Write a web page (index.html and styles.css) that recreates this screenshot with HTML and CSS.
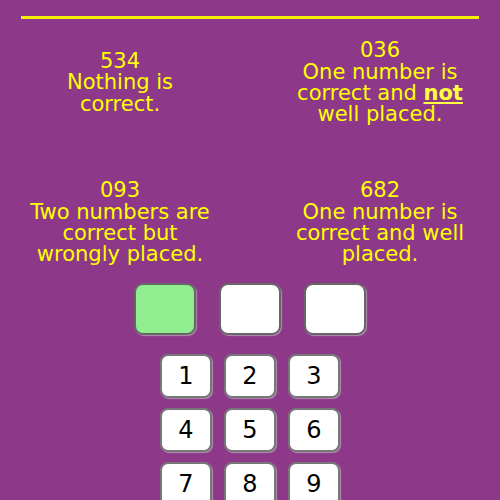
FILE: index.html
```html
<!DOCTYPE html>
<html>
<head>
<meta charset="utf-8">
<link rel="stylesheet" href="styles.css">
</head>
<body>
<div class="rule"></div>
<div class="clues">
  <div class="clue"><p class="txt">534<br>Nothing is<br>correct.</p></div>
  <div class="clue"><p class="txt">036<br>One number is<br>correct and <b class="em">not</b><br>well placed.</p></div>
  <div class="clue"><p class="txt">093<br>Two numbers are<br>correct but<br>wrongly placed.</p></div>
  <div class="clue"><p class="txt">682<br>One number is<br>correct and well<br>placed.</p></div>
</div>
<div class="slots">
  <div class="slot active"></div>
  <div class="slot"></div>
  <div class="slot"></div>
</div>
<div class="keypad">
  <div class="key">1</div><div class="key">2</div><div class="key">3</div>
  <div class="key">4</div><div class="key">5</div><div class="key">6</div>
  <div class="key">7</div><div class="key">8</div><div class="key">9</div>
</div>
</body>
</html>
```
FILE: styles.css
```css
html, body {
  margin: 0;
  padding: 0;
  background: #8e388a;
  height: 100%;
  overflow: hidden;
}
body {
  font-family: "DejaVu Sans", Verdana, sans-serif;
  color: #ffff00;
}
.rule {
  margin: 16px 21px 0 21px;
  height: 0;
  border-top: 3px solid #f4ee00;
}
.clues {
  display: grid;
  grid-template-columns: 240px 240px;
  column-gap: 20px;
  grid-auto-rows: 100px;
  row-gap: 40px;
  margin-top: 14px;
}
.clue {
  display: flex;
  align-items: center;
  justify-content: center;
  text-align: center;
}
.txt {
  margin: 0;
  font-size: 21px;
  line-height: 21.33px;
}
.em {
  text-decoration: underline;
  color: #ffff40;
}
.slots {
  display: flex;
  justify-content: center;
  gap: 23px;
  margin-top: 10px;
}
.slot {
  box-sizing: border-box;
  width: 62px;
  height: 52px;
  background: #fff;
  border: 2px solid #666;
  border-radius: 9px;
  box-shadow: 1px 1px 1px rgba(200,200,200,0.6);
}
.slot.active {
  background: #90ee90;
}
.keypad {
  display: grid;
  grid-template-columns: repeat(3, 52px);
  grid-auto-rows: 44px;
  column-gap: 12px;
  row-gap: 10px;
  justify-content: center;
  margin-top: 19px;
}
.key {
  box-sizing: border-box;
  background: #fff;
  border: 2px solid #777;
  border-radius: 8px;
  box-shadow: 1px 1px 1px rgba(200,200,200,0.6);
  color: #000;
  font-size: 24px;
  display: flex;
  align-items: center;
  justify-content: center;
}
```
